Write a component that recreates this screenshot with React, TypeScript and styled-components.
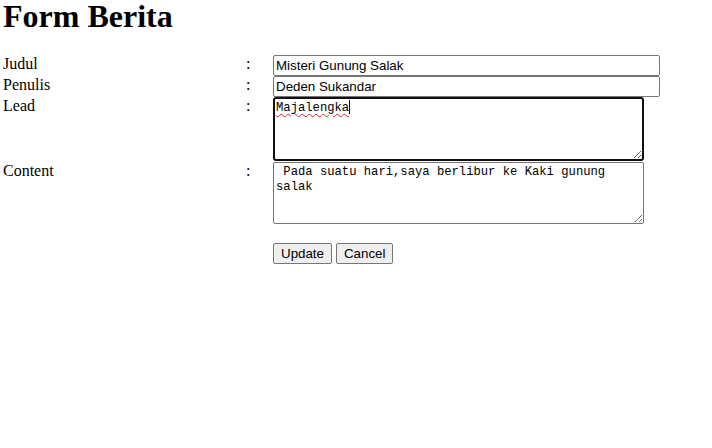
import React from 'react';
import styled, { createGlobalStyle } from 'styled-components';

const GlobalStyle = createGlobalStyle`
  html, body {
    margin: 0;
    padding: 0;
    background: #fff;
  }
  body {
    font-family: "Liberation Serif", "Times New Roman", serif;
    font-size: 16px;
    color: #000;
  }
`;

const Page = styled.div`
  padding: 0 0 0 3px;
`;

const Title = styled.h1`
  margin: 0 0 23px;
  font-family: "Liberation Serif", "Times New Roman", serif;
  font-size: 32px;
  font-weight: bold;
  line-height: 32px;
`;

const FormGrid = styled.form`
  display: grid;
  grid-template-columns: 243px 27px auto;
  align-items: start;
`;

const Label = styled.div<{ $top?: number }>`
  margin-top: ${(p) => p.$top ?? 0}px;
  font-size: 16px;
`;

const Colon = styled.div<{ $top?: number }>`
  margin-top: ${(p) => p.$top ?? 0}px;
  font-size: 16px;
`;

const Field = styled.div<{ $top?: number }>`
  margin-top: ${(p) => p.$top ?? 0}px;
  display: flex;
`;

const TextInput = styled.input`
  box-sizing: border-box;
  width: 387px;
  height: 21px;
  margin: 0;
  padding: 1px 2px;
  border: 1px solid #767676;
  border-radius: 2px;
  background: #fff;
  color: #000;
  font-family: "Liberation Sans", Arial, sans-serif;
  font-size: 13.333px;
  outline: none;
`;

const monoFont = `"Liberation Mono", "DejaVu Sans Mono", monospace`;

const TextArea = styled.textarea`
  box-sizing: border-box;
  display: block;
  width: 371px;
  height: 62px;
  margin: 0;
  padding: 2px;
  border: 1px solid #767676;
  border-radius: 2px;
  background: #fff;
  color: #000;
  font-family: ${monoFont};
  font-size: 12.2px;
  line-height: 15px;
  outline: none;
`;

const FocusedBox = styled.div`
  box-sizing: border-box;
  width: 371px;
  height: 64px;
  padding: 1px;
  border: 2px solid #101010;
  border-radius: 3px;
  background: #fff;
  color: #000;
  font-family: ${monoFont};
  font-size: 12.2px;
  line-height: 15px;
  overflow: auto;
  resize: both;
  white-space: pre-wrap;
`;

const Misspelled = styled.span`
  text-decoration: underline wavy #e02020;
  text-decoration-thickness: 1px;
  text-underline-offset: 2px;
`;

const Caret = styled.span`
  display: inline-block;
  width: 1px;
  height: 14px;
  vertical-align: -3px;
  background: #000;
`;

const ButtonRow = styled.div`
  grid-column: 3;
  display: flex;
  gap: 4px;
  margin-top: 19px;
`;

const Button = styled.button`
  box-sizing: border-box;
  height: 21px;
  margin: 0;
  padding: 1px 7px;
  border: 1px solid #767676;
  border-radius: 2px;
  background: #efefef;
  color: #000;
  font-family: "Liberation Sans", Arial, sans-serif;
  font-size: 13.333px;
  line-height: normal;
  cursor: default;
`;

const Spacer = styled.div`
  grid-column: 1 / span 2;
`;

const App: React.FC = () => {
  return (
    <Page>
      <GlobalStyle />
      <Title>Form Berita</Title>
      <FormGrid onSubmit={(e) => e.preventDefault()}>
        <Label>Judul</Label>
        <Colon>:</Colon>
        <Field>
          <TextInput type="text" defaultValue="Misteri Gunung Salak" />
        </Field>

        <Label>Penulis</Label>
        <Colon>:</Colon>
        <Field>
          <TextInput type="text" defaultValue="Deden Sukandar" />
        </Field>

        <Label>Lead</Label>
        <Colon>:</Colon>
        <Field>
          <FocusedBox role="textbox" aria-multiline="true">
            <Misspelled>Majalengka</Misspelled>
            <Caret />
          </FocusedBox>
        </Field>

        <Label $top={1}>Content</Label>
        <Colon $top={1}>:</Colon>
        <Field $top={1}>
          <TextArea
            spellCheck={false}
            defaultValue=" Pada suatu hari,saya berlibur ke Kaki gunung salak"
          />
        </Field>

        <Spacer />
        <ButtonRow>
          <Button type="submit">Update</Button>
          <Button type="button">Cancel</Button>
        </ButtonRow>
      </FormGrid>
    </Page>
  );
};

export default App;
